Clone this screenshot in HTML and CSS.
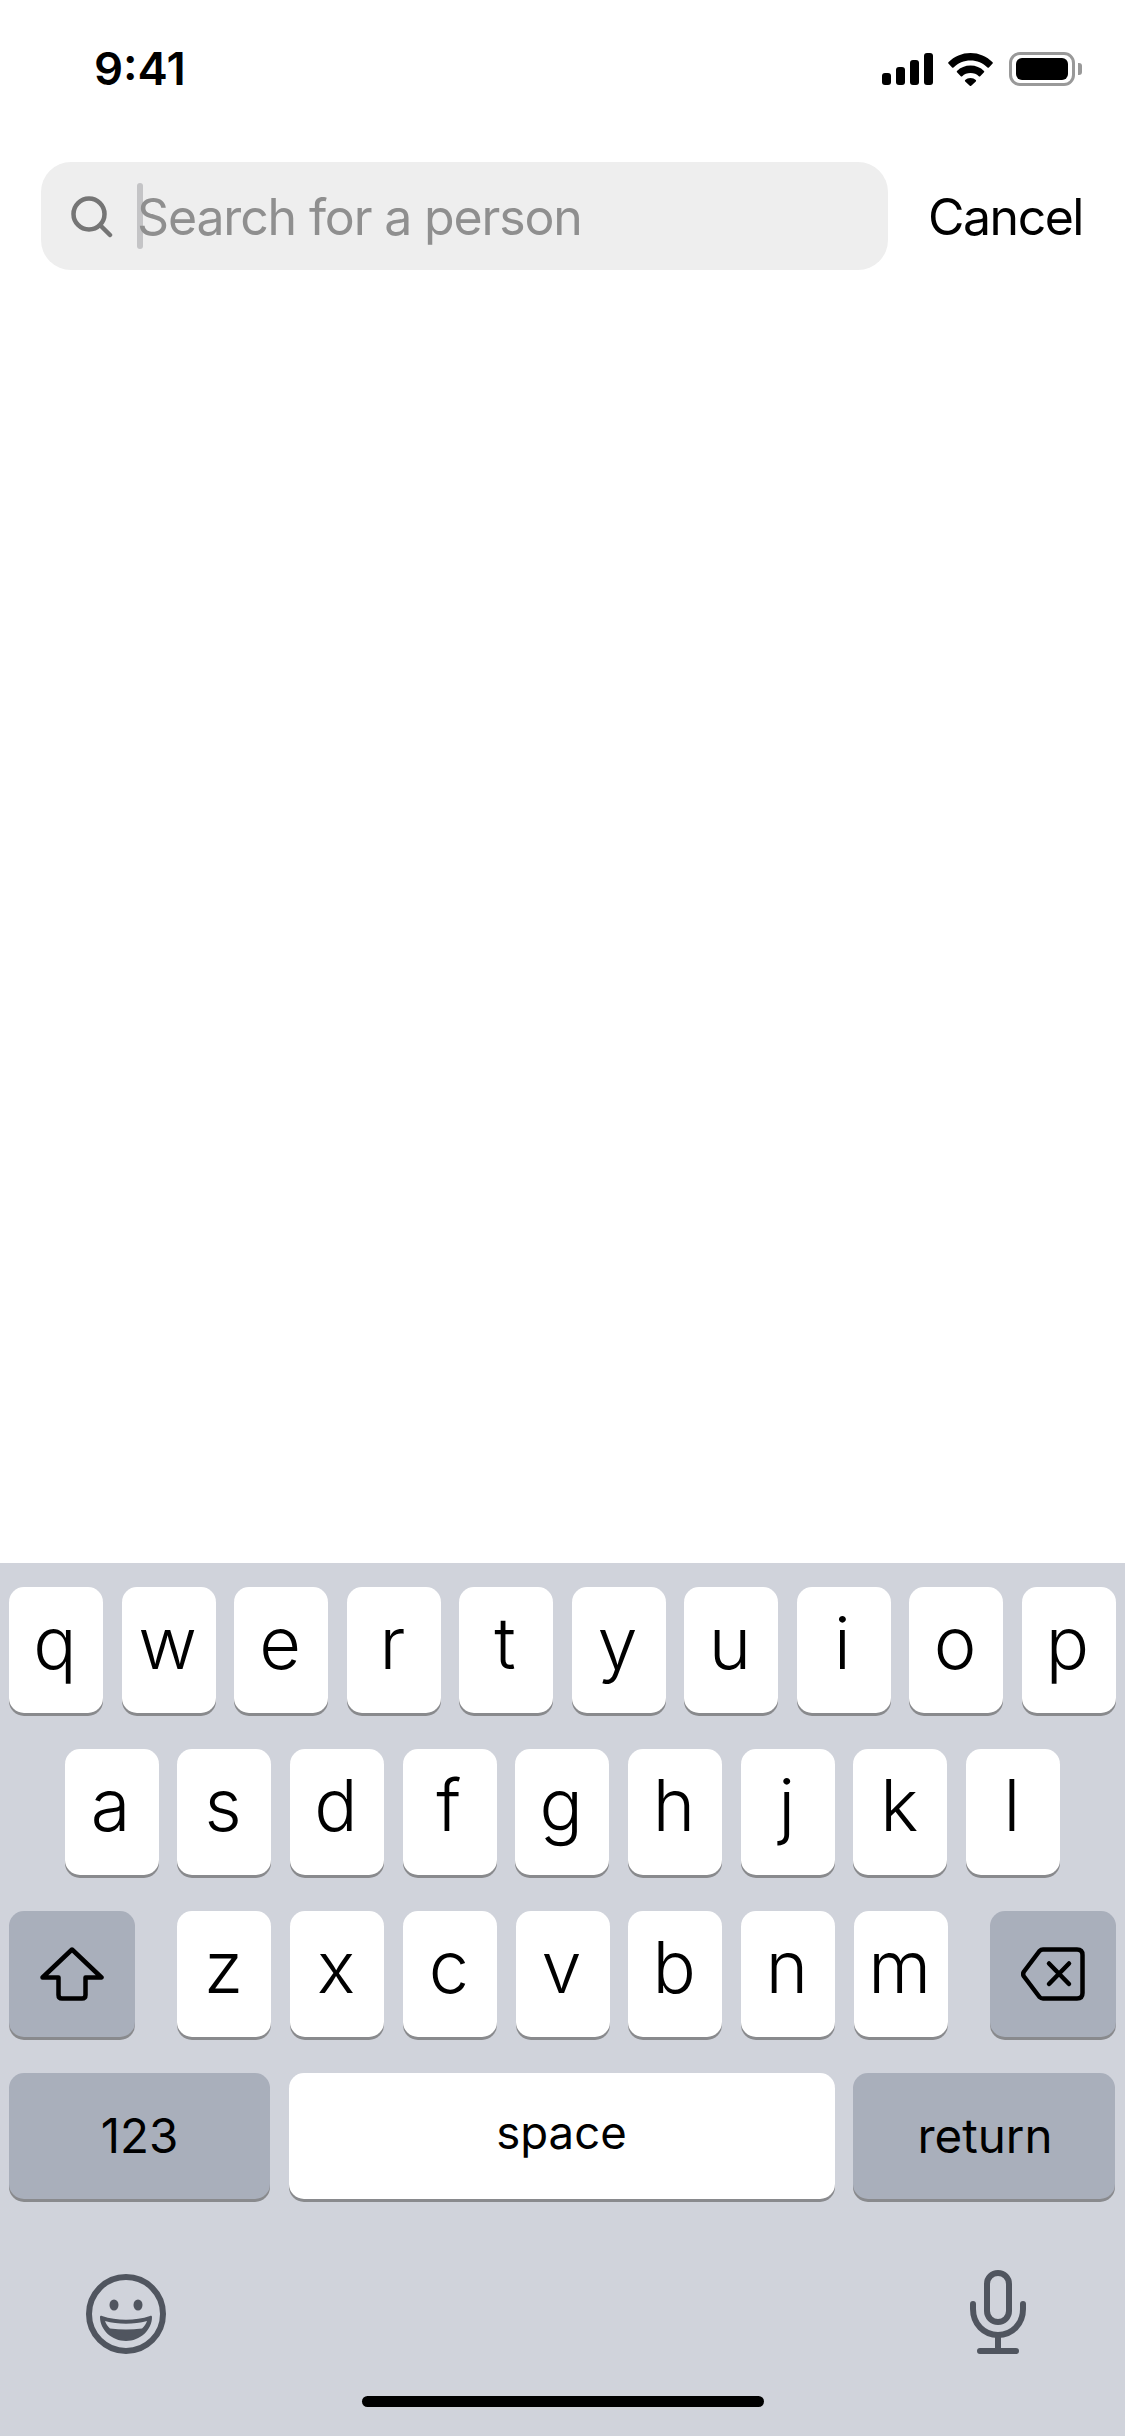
FILE: index.html
```html
<!DOCTYPE html>
<html lang="en">
<head>
<meta charset="utf-8">
<title>Search for a person</title>
<link rel="stylesheet" href="styles.css">
</head>
<body>
<div class="app">
  <header class="status">
    <span class="time">9:41</span>
    <div class="status-icons">
      <div class="signal"><i class="b1"></i><i class="b2"></i><i class="b3"></i><i class="b4"></i></div>
      <svg class="wifi" width="45" height="33" viewBox="0 0 45 33"><path d="M22.5 0C31 0 38.7 3.4 44.6 9.2c.4.4.4 1 0 1.4l-3.7 3.9c-.4.4-1 .4-1.4 0C35 10.100 29 7.500 22.500 7.500S10 10.100 5.500 14.500c-.4.4-1 .4-1.400 0L.4 10.600c-.4-.4-.4-1 0-1.400C6.300 3.400 14 0 22.500 0Z"/><path d="M22.500 12.500c5.200 0 10 2 13.500 5.400.4.4.4 1 0 1.400l-3.800 3.900c-.4.4-1 .4-1.400 0-2.100-2-5-3.200-8.300-3.200s-6.200 1.200-8.300 3.200c-.4.4-1 .4-1.400 0L9 19.300c-.4-.4-.4-1 0-1.400 3.500-3.400 8.300-5.400 13.500-5.400Z"/><path d="M22.500 25c2.100 0 4 .8 5.300 2.100.4.4.4.9 0 1.300l-4.600 4.300c-.4.4-1 .4-1.400 0l-4.600-4.300c-.4-.4-.4-.9 0-1.300C18.500 25.800 20.400 25 22.500 25Z"/></svg>
      <div class="battery"><div class="battery-body"><div class="battery-fill"></div></div><div class="battery-nub"></div></div>
    </div>
  </header>

  <div class="search-row">
    <div class="search-box">
      <svg class="search-icon" width="42" height="42" viewBox="0 0 42 42" fill="none"><circle cx="18" cy="18" r="15.500" stroke="#757575" stroke-width="4.500"/><path d="M29.500 29.500 39 39" stroke="#757575" stroke-width="4.500" stroke-linecap="round"/></svg>
      <span class="caret"></span>
      <span class="placeholder">Search for a person</span>
    </div>
    <span class="cancel">Cancel</span>
  </div>

  <main class="results"></main>

  <section class="keyboard">
    <div class="row row-top">
      <div class="key">q</div><div class="key">w</div><div class="key">e</div><div class="key">r</div><div class="key">t</div><div class="key">y</div><div class="key">u</div><div class="key">i</div><div class="key">o</div><div class="key">p</div>
    </div>
    <div class="row row-mid">
      <div class="key">a</div><div class="key">s</div><div class="key">d</div><div class="key">f</div><div class="key">g</div><div class="key">h</div><div class="key">j</div><div class="key">k</div><div class="key">l</div>
    </div>
    <div class="row row-low">
      <div class="key mod wide">
        <svg width="64" height="54" viewBox="0 0 64 54" fill="none"><path d="M32 2.500 61.500 30.500H45.500V48C45.500 50.500 44 51.500 42 51.500H22C20 51.500 18.500 50.500 18.500 48V30.500H2.500Z" stroke="#000" stroke-width="4.500" stroke-linejoin="round"/></svg>
      </div>
      <div class="letters">
        <div class="key">z</div><div class="key">x</div><div class="key">c</div><div class="key">v</div><div class="key">b</div><div class="key">n</div><div class="key">m</div>
      </div>
      <div class="key mod wide">
        <svg width="64" height="54" viewBox="0 0 64 54" fill="none"><path d="M22 2.500H56C59.500 2.500 61.500 4.500 61.500 8V46C61.500 49.500 59.500 51.500 56 51.500H22C20.500 51.500 19.500 51 18.500 50L3 29.500C2 28 2 26 3 24.500L18.500 4C19.500 3 20.500 2.500 22 2.500Z" stroke="#000" stroke-width="4.500" stroke-linejoin="round"/><path d="M28 16.500 48 37M48 16.500 28 37" stroke="#000" stroke-width="4.500" stroke-linecap="round"/></svg>
      </div>
    </div>
    <div class="row row-bottom">
      <div class="key mod action">123</div>
      <div class="key spacebar">space</div>
      <div class="key mod action return">return</div>
    </div>
    <div class="kb-tools">
      <svg class="emoji" width="80" height="80" viewBox="0 0 80 80" fill="none"><circle cx="40" cy="40" r="37" stroke="#50555f" stroke-width="6"/><ellipse cx="28" cy="31" rx="4.500" ry="5.500" fill="#50555f"/><ellipse cx="52" cy="31" rx="4.500" ry="5.500" fill="#50555f"/><path d="M14 43C14 42 15 41.500 16 42C31 47 49 47 64 42C65 41.500 66 42 66 43C66 56 54 67 40 67C26 67 14 56 14 43Z" fill="#50555f"/><path d="M19 47C32 50.500 48 50.500 61 47C60 50 58 52.500 56 54.500C45 55.800 35 55.800 24 54.500C22 52.500 20 50 19 47Z" fill="#d0d3db"/></svg>
      <svg class="mic" width="56" height="84" viewBox="0 0 56 84" fill="none" stroke="#50555f" stroke-width="6" stroke-linecap="round"><rect x="17" y="3" width="22" height="49" rx="11"/><path d="M3 34V39C3 54 14 65 28 65C42 65 53 54 53 39V34"/><path d="M28 65V81M10 81H46"/></svg>
    </div>
    <div class="home-bar"></div>
  </section>
</div>
</body>
</html>
```

FILE: styles.css
```css
* { box-sizing: border-box; }
html, body { margin: 0; padding: 0; background: #fff; }
body { font-family: Inter, "Liberation Sans", sans-serif; color: #000; }

.app { width: 1125px; height: 2436px; display: flex; flex-direction: column; overflow: hidden; }

.status { height: 138px; flex: none; display: flex; align-items: center; justify-content: space-between; padding: 0 43px 0 94px; }
.time { font-size: 45.500px; line-height: 1; font-weight: 600; }
.status-icons { display: flex; align-items: center; gap: 15px; }
.signal { display: flex; align-items: flex-end; gap: 5px; height: 32px; }
.signal i { display: block; width: 9px; border-radius: 3px; background: #000; }
.signal .b1 { height: 12px; }
.signal .b2 { height: 18px; }
.signal .b3 { height: 25px; }
.signal .b4 { height: 32px; }
.wifi { fill: #000; display: block; }
.battery { display: flex; align-items: center; gap: 3px; margin-left: 1px; }
.battery-body { width: 66px; height: 34px; border: 3px solid #999; border-radius: 11px; padding: 3px 4px; }
.battery-fill { width: 100%; height: 100%; background: #000; border-radius: 6px; }
.battery-nub { width: 4px; height: 12px; background: #999; border-radius: 0 3px 3px 0; }

.search-row { flex: none; margin-top: 24px; height: 108px; display: flex; align-items: center; padding: 0 42px 0 41px; gap: 40px; }
.search-box { flex: 1; height: 108px; background: #eee; border-radius: 30px; display: flex; align-items: center; padding-left: 30px; }
.search-icon { flex: none; margin-right: 24px; margin-top: 2px; }
.caret { flex: none; width: 6px; height: 66px; border-radius: 3px; background: #c4c4c6; margin-right: -6px; }
.placeholder { font-size: 50px; line-height: 1; color: #8f8f8f; letter-spacing: -1.150px; padding-top: 2px; }
.cancel { font-size: 50px; line-height: 1; letter-spacing: -1.500px; flex: none; width: 155px; padding-top: 2px; }

.results { flex: 1; }

.keyboard { flex: none; height: 873px; background: #d0d3db; padding: 24px 9px 0; display: flex; flex-direction: column; gap: 36px; }
.row { display: flex; gap: 18.500px; height: 126px; }
.row-mid { padding-left: 55.500px; gap: 18.700px; }
.row-low { justify-content: space-between; }
.row-bottom { padding-right: 1px; }
.letters { display: flex; gap: 18.700px; }

.key { width: 94px; height: 126px; background: #fff; border-radius: 15px; box-shadow: 0 3px 0 #898a8d; display: flex; align-items: center; justify-content: center; font-size: 72px; font-weight: 350; line-height: 1; padding: 0 2px 15px 0; }
.mod { background: #a9afbb; }
.wide { width: 126px; padding: 0; }
.action { width: 261px; font-size: 47.500px; padding: 0; font-weight: 400; }
.return { width: 262px; padding-left: 2px; }
.spacebar { flex: 1; font-size: 45.500px; font-weight: 400; padding: 0 0 6px; }

.kb-tools { display: flex; align-items: flex-end; justify-content: space-between; height: 85px; margin-top: 35px; padding: 0 90px 1px 77px; }
.emoji, .mic { display: block; }
.home-bar { width: 402px; height: 11px; border-radius: 6px; background: #000; margin: 5px auto 0; }
```
